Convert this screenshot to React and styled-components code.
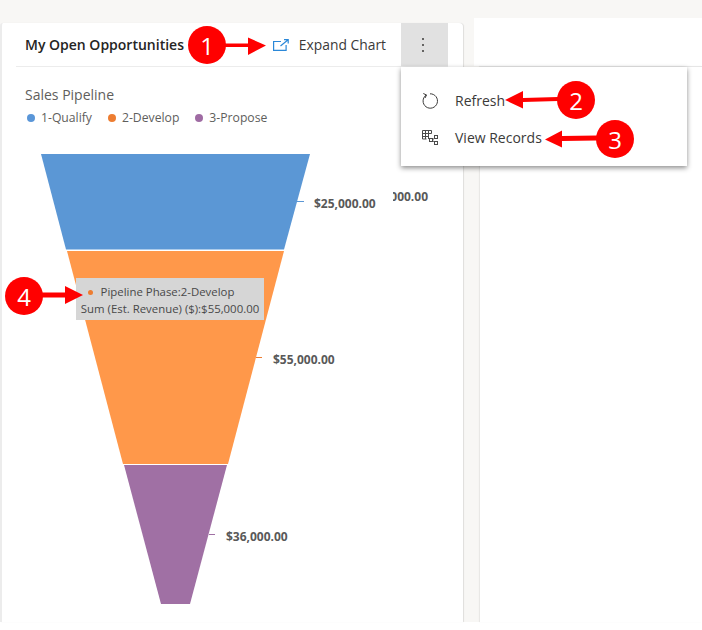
import React from "react";
import styled, { createGlobalStyle } from "styled-components";

const GlobalStyle = createGlobalStyle`
  html, body {
    margin: 0;
    background: #fff;
    font-family: "Open Sans", "Noto Sans", sans-serif;
  }
`;

const Page = styled.div`
  position: relative;
  width: 702px;
  height: 630px;
  overflow: hidden;
  background: #fff;
`;

const Board = styled.div`
  display: flex;
  height: 622px;
  background: #f8f7f5;
`;

const Card = styled.section`
  position: relative;
  width: 461px;
  margin-top: 23px;
  background: #fff;
  border-left: 2px solid #ececec;
  border-top-left-radius: 3px;
  border-top-right-radius: 4px;
  box-shadow: 1px 0 1px rgba(0, 0, 0, 0.1);
`;

const CardHeader = styled.header`
  display: flex;
  align-items: center;
  height: 43px;
  margin: 0 15px 0 14px;
  border-bottom: 1px solid #ececec;
`;

const CardTitle = styled.h2`
  flex: 1;
  margin: 0 0 0 9px;
  font-size: 14px;
  font-weight: 600;
  color: #252423;
`;

const ExpandButton = styled.div`
  display: flex;
  align-items: center;
  gap: 10px;
  margin-right: 15px;
  font-size: 13.85px;
  color: #3b3a39;
`;

const MoreButton = styled.div`
  display: flex;
  align-items: center;
  justify-content: center;
  width: 47px;
  height: 43px;
  padding-right: 3px;
  box-sizing: border-box;
  background: #e1e1e1;
`;

const ChartHeading = styled.div`
  padding: 19px 0 0 23px;
`;

const ChartTitle = styled.div`
  font-size: 14px;
  line-height: 18px;
  color: #605e5c;
`;

const Legend = styled.div`
  display: flex;
  gap: 16px;
  margin-top: 6px;
  padding-left: 2px;
`;

const LegendItem = styled.span`
  display: flex;
  align-items: center;
  gap: 6px;
  font-size: 12.2px;
  line-height: 16px;
  color: #605e5c;

  &::before {
    content: "";
    width: 8px;
    height: 8px;
    border-radius: 50%;
    background: ${(p) => p.$color};
  }
`;

const ChartSvg = styled.svg`
  display: block;
  position: absolute;
  left: 0;
  top: 110px;
`;

const ValueLabel = styled.text`
  font-size: 12px;
  font-weight: 700;
  fill: #595959;
`;

const Tooltip = styled.div`
  position: absolute;
  left: 74px;
  top: 255px;
  width: 188px;
  height: 42px;
  padding-top: 5px;
  box-sizing: border-box;
  background: #d6d6d6;
  font-size: 11.4px;
  line-height: 17px;
  color: #484848;
  text-align: center;
  white-space: nowrap;
`;

const TooltipDot = styled.span`
  display: inline-block;
  width: 5px;
  height: 5px;
  margin: 0 8px 1px 0;
  border-radius: 50%;
  background: #ed7d31;
`;

const TooltipLine = styled.div`
  margin-left: ${(p) => p.$indent || 0}px;
`;

const RightPane = styled.div`
  display: flex;
  flex: 1;
  flex-direction: column;
  margin-top: 18px;
`;

const PaneHead = styled.div`
  height: 48px;
  margin-left: 11px;
  background: #fff;
`;

const PaneBody = styled.div`
  flex: 1;
  margin-left: 17px;
  background: #fff;
  border-top: 1px solid #e6e6e6;
  box-shadow: -1px 0 1px rgba(0, 0, 0, 0.06);
`;

const Menu = styled.div`
  position: absolute;
  left: 401px;
  top: 67px;
  display: flex;
  flex-direction: column;
  box-sizing: border-box;
  width: 286px;
  height: 99px;
  padding: 15px 0 0 21px;
  background: #fff;
  box-shadow: 0 2px 5px rgba(0, 0, 0, 0.45);
`;

const MenuItem = styled.div`
  display: flex;
  align-items: center;
  height: 37px;
  font-size: 14px;
  color: #3b3a39;
`;

const MenuIcon = styled.span`
  display: flex;
  width: 33px;
`;

const Callout = styled.div`
  position: absolute;
  left: ${(p) => p.$x - 19}px;
  top: ${(p) => p.$y - 19}px;
  display: flex;
  align-items: center;
  justify-content: center;
  width: 38px;
  height: 38px;
  border-radius: 50%;
  background: #ff0000;
  font-size: 24px;
  color: #fff;
`;

const ArrowLayer = styled.svg`
  position: absolute;
  left: 0;
  top: 0;
  pointer-events: none;
`;

const ExpandIcon = () => (
  <svg width="16" height="12" viewBox="0 0 16 12" fill="none" stroke="#2b88d8" strokeWidth="1.2">
    <path d="M8 2.500H.6v8.900h12.500V6" />
    <path d="M7.500 7L14.500 1.200M11 .6h4.200V4.500" />
  </svg>
);

const DotsIcon = () => (
  <svg width="4" height="16" viewBox="0 0 4 16" fill="#3b3a39">
    <circle cx="2" cy="2" r="1" />
    <circle cx="2" cy="8" r="1" />
    <circle cx="2" cy="14" r="1" />
  </svg>
);

const RefreshIcon = () => (
  <svg width="16" height="16" viewBox="0 0 16 16" fill="none" stroke="#3b3a39" strokeWidth="1">
    <path d="M4.300 2A7.200 7.200 0 1 0 8 .8" />
    <path d="M1.300 .5l3.200 1.500-1.500 3" />
  </svg>
);

const RecordsIcon = () => (
  <svg width="16" height="15" viewBox="0 0 16 15" fill="none" stroke="#4a4a4a" strokeWidth="1">
    <path d="M.5 .5h9M.5 3.500h9M.5 6.500h6M.5 .5v8.500M3.500 .5v8.500M6.500 .5v8.500M9.500 .5v3" />
    <path d="M.5 9h4" />
    <rect x="7.500" y="8.500" width="3" height="3" />
    <rect x="12.500" y="5.500" width="3" height="3" />
    <rect x="12.500" y="11.500" width="3" height="3" />
    <path d="M10.500 10l2-2M10.500 10.500l2 1.500" />
  </svg>
);

export default function App() {
  return (
    <Page>
      <GlobalStyle />
      <Board>
        <Card>
          <CardHeader>
            <CardTitle>My Open Opportunities</CardTitle>
            <ExpandButton>
              <ExpandIcon />
              Expand Chart
            </ExpandButton>
            <MoreButton>
              <DotsIcon />
            </MoreButton>
          </CardHeader>
          <ChartHeading>
            <ChartTitle>Sales Pipeline</ChartTitle>
            <Legend>
              <LegendItem $color="#5a96d8">1-Qualify</LegendItem>
              <LegendItem $color="#ed7d31">2-Develop</LegendItem>
              <LegendItem $color="#9f6ba3">3-Propose</LegendItem>
            </Legend>
          </ChartHeading>
          <ChartSvg width="460" height="489" viewBox="2 133 460 489">
            <defs>
              <clipPath id="behind">
                <rect x="393" y="180" width="60" height="30" />
              </clipPath>
            </defs>
            <polygon points="41,154 310,154 284,249.500 66,249.500" fill="#5b97d5" />
            <polygon points="67,251 284,251 228,464 123,464" fill="#ff984a" />
            <polygon points="124,465 227,465 190,604 161,604" fill="#a070a4" />
            <line x1="297" y1="201.500" x2="304" y2="201.500" stroke="#5b97d5" />
            <line x1="256" y1="357.500" x2="262" y2="357.500" stroke="#ed7d31" />
            <line x1="209" y1="534.500" x2="215" y2="534.500" stroke="#a070a4" />
            <ValueLabel x="314" y="208">$25,000.00</ValueLabel>
            <ValueLabel x="273" y="364">$55,000.00</ValueLabel>
            <ValueLabel x="226" y="541">$36,000.00</ValueLabel>
            <g clipPath="url(#behind)">
              <ValueLabel x="428" y="201" textAnchor="end">$25,000.00</ValueLabel>
            </g>
          </ChartSvg>
          <Tooltip>
            <TooltipLine $indent={-18}>
              <TooltipDot />
              Pipeline Phase:2-Develop
            </TooltipLine>
            <TooltipLine>Sum (Est. Revenue) ($):$55,000.00</TooltipLine>
          </Tooltip>
        </Card>
        <RightPane>
          <PaneHead />
          <PaneBody />
        </RightPane>
      </Board>
      <Menu>
        <MenuItem>
          <MenuIcon>
            <RefreshIcon />
          </MenuIcon>
          Refresh
        </MenuItem>
        <MenuItem>
          <MenuIcon>
            <RecordsIcon />
          </MenuIcon>
          View Records
        </MenuItem>
      </Menu>
      <ArrowLayer width="702" height="630" fill="#ff0000">
        <path d="M224 43.500h24V37.500l18 8-18 9.500v-8h-24z" />
        <path d="M558 97l-35 1V91l-18 9 18 8.500V102l35-1z" />
        <path d="M597 135.500l-35 .5V130.500l-17 9 17 8V141l35-.5z" />
        <path d="M40 292.500h25v-6.500l18 9-18 9v-6.500H40z" />
      </ArrowLayer>
      <Callout $x={207} $y={45}>1</Callout>
      <Callout $x={576} $y={100}>2</Callout>
      <Callout $x={615} $y={139}>3</Callout>
      <Callout $x={24} $y={296}>4</Callout>
    </Page>
  );
}
